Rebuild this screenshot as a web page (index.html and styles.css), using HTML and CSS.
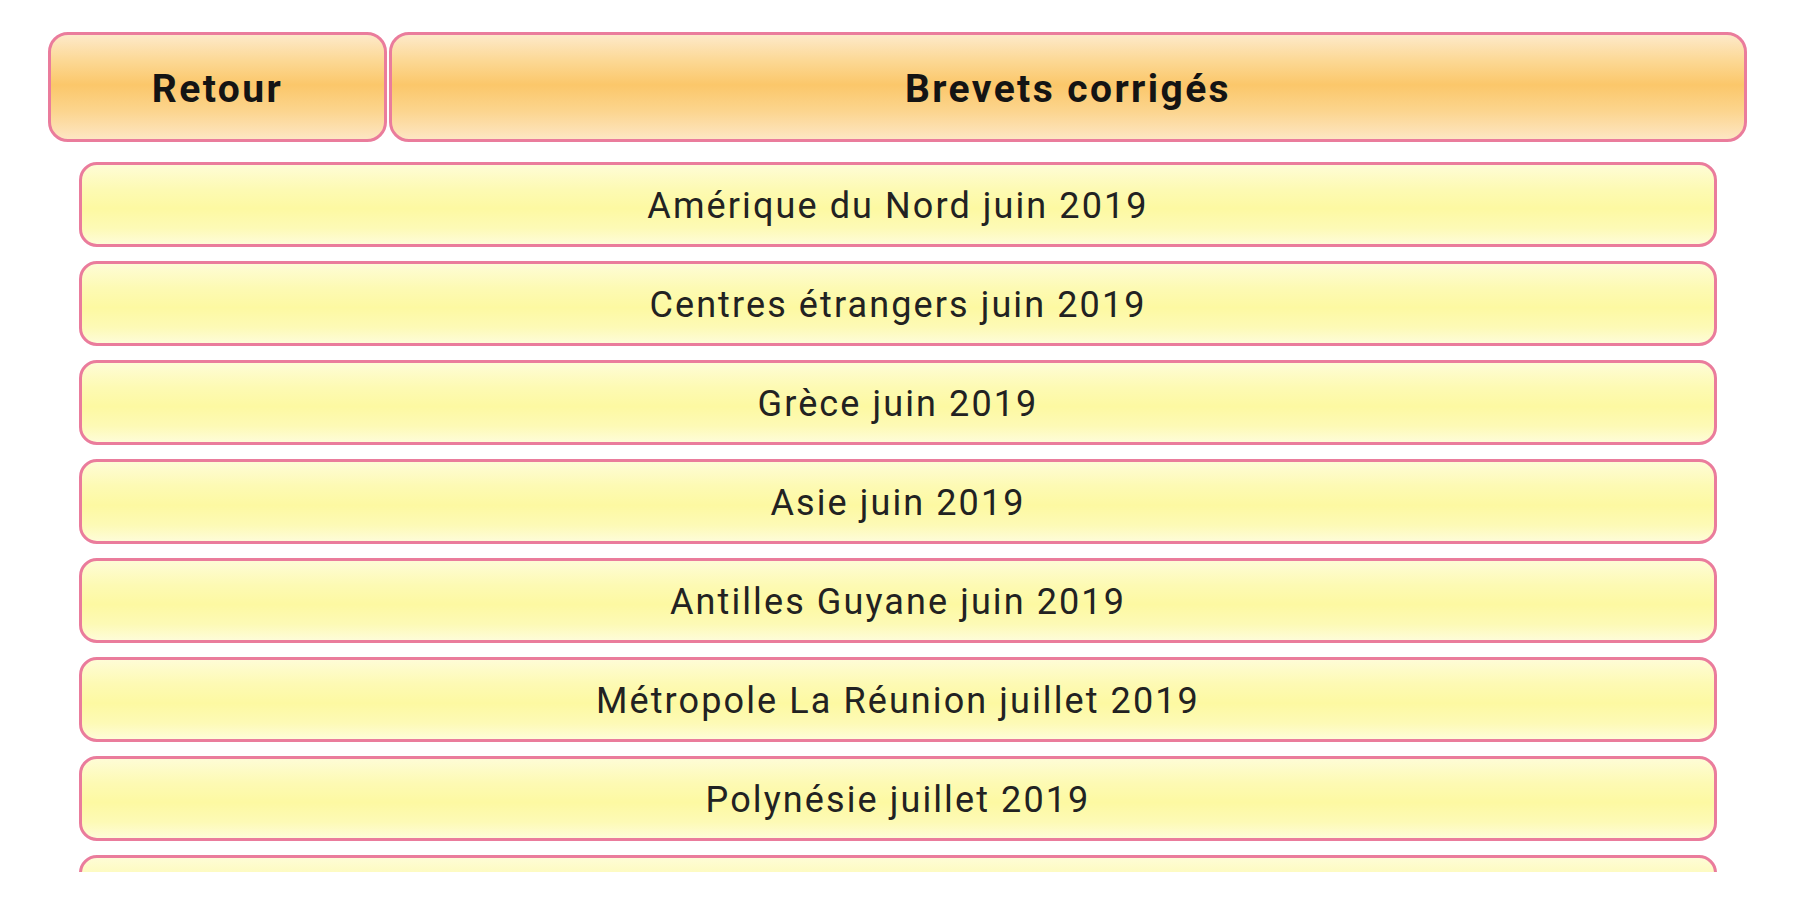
FILE: index.html
```html
<!DOCTYPE html>
<html lang="fr">
<head>
<meta charset="utf-8">
<title>Brevets corrigés</title>
<link rel="stylesheet" href="styles.css">
</head>
<body>
<div class="page">
  <header class="topbar">
    <div class="btn btn-back">Retour</div>
    <div class="btn btn-title">Brevets corrigés</div>
  </header>
  <div class="list">
    <div class="item">Amérique du Nord juin 2019</div>
    <div class="item">Centres étrangers juin 2019</div>
    <div class="item">Grèce juin 2019</div>
    <div class="item">Asie juin 2019</div>
    <div class="item">Antilles Guyane juin 2019</div>
    <div class="item">Métropole La Réunion juillet 2019</div>
    <div class="item">Polynésie juillet 2019</div>
    <div class="item"></div>
  </div>
</div>
</body>
</html>
```

FILE: styles.css
```css
html, body {
  margin: 0;
  padding: 0;
  background: #ffffff;
}
body {
  width: 1800px;
  height: 900px;
  overflow: hidden;
  font-family: Roboto, "Liberation Sans", sans-serif;
  color: #1c1c1c;
}
.page {
  display: flex;
  flex-direction: column;
}
.topbar {
  display: flex;
  gap: 2px;
  padding: 32px 53px 0 48px;
  height: 110px;
}
.btn {
  box-sizing: border-box;
  height: 110px;
  border: 3px solid #ea7c9c;
  border-radius: 20px;
  background: linear-gradient(to bottom, #fde9c9 0%, #fcd894 25%, #fbc76a 48%, #fcd48c 72%, #fde6c3 100%);
  display: flex;
  align-items: center;
  justify-content: center;
  font-weight: 700;
  font-size: 39px;
  letter-spacing: 2.4px;
  color: #141414;
  padding-top: 4px;
}
.btn-back {
  width: 339px;
  flex: none;
}
.btn-title {
  flex: 1;
}
.list {
  margin: 20px 83px 0 79px;
  height: 710px;
  overflow: hidden;
  display: flex;
  flex-direction: column;
  gap: 14px;
}
.item {
  box-sizing: border-box;
  flex: none;
  height: 85px;
  border: 3px solid #ea7c9c;
  border-radius: 18px;
  background: linear-gradient(to bottom, #fefcd6 0%, #fdfab4 30%, #fdf9a2 55%, #fdfab6 80%, #fefcd8 100%);
  display: flex;
  align-items: center;
  justify-content: center;
  font-size: 36px;
  letter-spacing: 2.1px;
  color: #222222;
  padding-top: 3px;
}
```
